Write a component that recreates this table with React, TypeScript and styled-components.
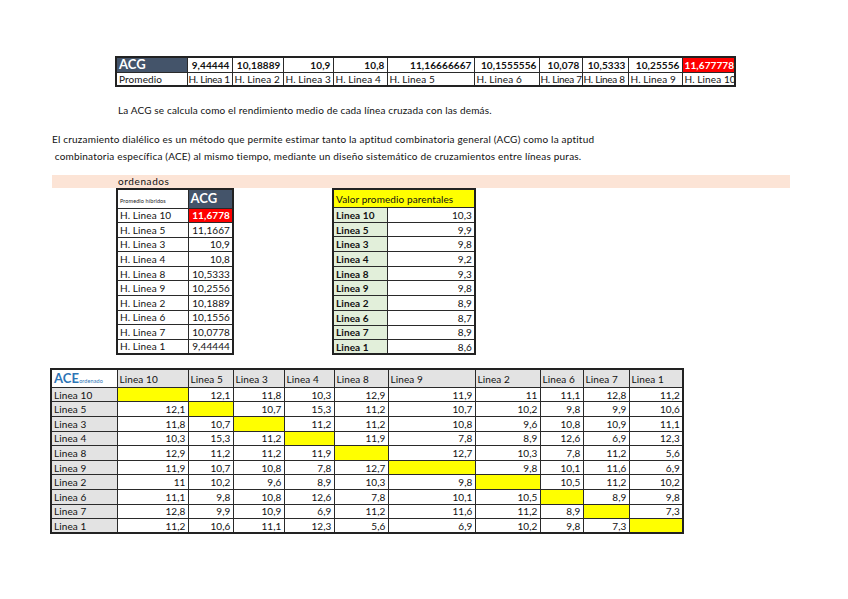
import React from "react";
import styled, { createGlobalStyle } from "styled-components";

const FONT = `"Lato", "Open Sans", "Liberation Sans", sans-serif`;

const Global = createGlobalStyle`
  html, body { margin: 0; padding: 0; background: #ffffff; }
  body { font-family: ${FONT}; color: #111; }
`;

const Page = styled.div`
  width: 848px;
  height: 599px;
  padding-top: 56px;
  box-sizing: border-box;
  display: flex;
  flex-direction: column;
  font-size: 10px;
`;

const Sheet = styled.table<{ $left: number; $width: number }>`
  margin-left: ${(p) => p.$left}px;
  width: ${(p) => p.$width}px;
  table-layout: fixed;
  border-collapse: collapse;
  border: 2px solid #222;
  font-family: ${FONT};
  font-size: 10px;
`;

const Cell = styled.td<{
  $bg?: string;
  $color?: string;
  $bold?: boolean;
  $align?: "left" | "right";
  $h?: number;
  $size?: number;
  $tight?: boolean;
}>`
  border: 1px solid #2a2a2a;
  height: ${(p) => p.$h ?? 14}px;
  padding: 0 ${(p) => (p.$tight ? 1 : 2)}px;
  box-sizing: border-box;
  background: ${(p) => p.$bg ?? "#fff"};
  color: ${(p) => p.$color ?? "#111"};
  font-weight: ${(p) => (p.$bold ? 700 : 400)};
  font-size: ${(p) => p.$size ?? 10}px;
  text-align: ${(p) => p.$align ?? "left"};
  letter-spacing: ${(p) => (p.$tight ? "-0.3px" : "0.1px")};
  white-space: nowrap;
  overflow: hidden;
  line-height: 1;
  vertical-align: middle;
`;

const Note = styled.div`
  margin-top: 16px;
  padding-left: 118px;
  height: 14px;
  line-height: 14px;
  font-size: 10px;
  letter-spacing: 0.15px;
`;

const Para = styled.div`
  margin-top: 14px;
  padding-left: 52px;
  line-height: 17px;
  font-size: 10px;
  letter-spacing: 0.2px;
`;

const Band = styled.div`
  margin-top: 10px;
  margin-left: 52px;
  width: 738px;
  height: 13px;
  background: #fce4d6;
  padding-left: 66px;
  box-sizing: border-box;
  font-size: 10px;
  line-height: 13px;
  letter-spacing: 0.6px;
`;

const TablesRow = styled.div`
  display: flex;
  align-items: flex-start;
`;

const Spacer = styled.div`
  height: 13px;
`;

const AceTitle = styled.span`
  color: #2e75b6;
  font-weight: 700;
  font-size: 13px;
`;

const Tiny = styled.span<{ $color?: string }>`
  font-size: 5.5px;
  color: ${(p) => p.$color ?? "#222"};
`;

const TOP_COLS = [71, 45, 51, 50, 54, 87, 65, 43, 46, 54, 53];
const ACE_COLS = [66, 71, 45, 51, 50, 54, 87, 65, 43, 46, 54];

const topValues = [
  "9,44444",
  "10,18889",
  "10,9",
  "10,8",
  "11,16666667",
  "10,1555556",
  "10,078",
  "10,5333",
  "10,25556",
  "11,677778",
];

const ordered: [string, string][] = [
  ["H. Linea 10", "11,6778"],
  ["H. Linea 5", "11,1667"],
  ["H. Linea 3", "10,9"],
  ["H. Linea 4", "10,8"],
  ["H. Linea 8", "10,5333"],
  ["H. Linea 9", "10,2556"],
  ["H. Linea 2", "10,1889"],
  ["H. Linea 6", "10,1556"],
  ["H. Linea 7", "10,0778"],
  ["H. Linea 1", "9,44444"],
];

const parentales: [string, string][] = [
  ["Linea 10", "10,3"],
  ["Linea 5", "9,9"],
  ["Linea 3", "9,8"],
  ["Linea 4", "9,2"],
  ["Linea 8", "9,3"],
  ["Linea 9", "9,8"],
  ["Linea 2", "8,9"],
  ["Linea 6", "8,7"],
  ["Linea 7", "8,9"],
  ["Linea 1", "8,6"],
];

const aceOrder = ["10", "5", "3", "4", "8", "9", "2", "6", "7", "1"];
const Y = null;
const ace: (string | null)[][] = [
  [Y, "12,1", "11,8", "10,3", "12,9", "11,9", "11", "11,1", "12,8", "11,2"],
  ["12,1", Y, "10,7", "15,3", "11,2", "10,7", "10,2", "9,8", "9,9", "10,6"],
  ["11,8", "10,7", Y, "11,2", "11,2", "10,8", "9,6", "10,8", "10,9", "11,1"],
  ["10,3", "15,3", "11,2", Y, "11,9", "7,8", "8,9", "12,6", "6,9", "12,3"],
  ["12,9", "11,2", "11,2", "11,9", Y, "12,7", "10,3", "7,8", "11,2", "5,6"],
  ["11,9", "10,7", "10,8", "7,8", "12,7", Y, "9,8", "10,1", "11,6", "6,9"],
  ["11", "10,2", "9,6", "8,9", "10,3", "9,8", Y, "10,5", "11,2", "10,2"],
  ["11,1", "9,8", "10,8", "12,6", "7,8", "10,1", "10,5", Y, "8,9", "9,8"],
  ["12,8", "9,9", "10,9", "6,9", "11,2", "11,6", "11,2", "8,9", Y, "7,3"],
  ["11,2", "10,6", "11,1", "12,3", "5,6", "6,9", "10,2", "9,8", "7,3", Y],
];

const SLATE = "#44546a";
const RED = "#ff0000";
const YELLOW = "#ffff00";
const GREEN = "#e2efda";
const GRAY = "#e3e3e3";

function Cols({ widths }: { widths: number[] }) {
  return (
    <colgroup>
      {widths.map((w, i) => (
        <col key={i} style={{ width: w }} />
      ))}
    </colgroup>
  );
}

export default function App() {
  return (
    <>
      <Global />
      <Page>
        <Sheet $left={115} $width={620}>
          <Cols widths={TOP_COLS} />
          <tbody>
            <tr>
              <Cell $bg={SLATE} $color="#fff" $bold $size={13} $h={15}>
                ACG
              </Cell>
              {topValues.map((v, i) => (
                <Cell
                  key={i}
                  $h={15}
                  $bold
                  $align="right"
                  $bg={i === 9 ? RED : "#fff"}
                  $color={i === 9 ? "#fff" : "#111"}
                >
                  {v}
                </Cell>
              ))}
            </tr>
            <tr>
              <Cell>Promedio</Cell>
              {topValues.map((_, i) => (
                <Cell key={i} $tight={i === 0 || i === 6 || i === 7}>
                  H. Linea {i + 1}
                </Cell>
              ))}
            </tr>
          </tbody>
        </Sheet>

        <Note>La ACG se calcula como el rendimiento medio de cada línea cruzada con las demás.</Note>

        <Para>
          El cruzamiento dialélico es un método que permite estimar tanto la aptitud combinatoria general (ACG) como la aptitud
          <br />
          &nbsp;combinatoria específica (ACE) al mismo tiempo, mediante un diseño sistemático de cruzamientos entre líneas puras.
        </Para>

        <Band>ordenados</Band>

        <TablesRow>
          <Sheet $left={116} $width={116}>
            <Cols widths={[71, 45]} />
            <tbody>
              <tr>
                <Cell $h={19}>
                  <Tiny>Promedio híbridos</Tiny>
                </Cell>
                <Cell $h={19} $bg={SLATE} $color="#fff" $bold $size={13}>
                  ACG
                </Cell>
              </tr>
              {ordered.map(([l, v], i) => (
                <tr key={l}>
                  <Cell $h={14.6}>{l}</Cell>
                  <Cell
                    $h={14.6}
                    $align="right"
                    $bold={i === 0}
                    $bg={i === 0 ? RED : "#fff"}
                    $color={i === 0 ? "#fff" : "#111"}
                  >
                    {v}
                  </Cell>
                </tr>
              ))}
            </tbody>
          </Sheet>

          <Sheet $left={98} $width={142}>
            <Cols widths={[54, 88]} />
            <tbody>
              <tr>
                <Cell $h={18.5} colSpan={2} $bg={YELLOW}>
                  Valor promedio parentales
                </Cell>
              </tr>
              {parentales.map(([l, v]) => (
                <tr key={l}>
                  <Cell $h={14.7} $bg={GREEN} $bold>
                    {l}
                  </Cell>
                  <Cell $h={14.7} $align="right">
                    {v}
                  </Cell>
                </tr>
              ))}
            </tbody>
          </Sheet>
        </TablesRow>

        <Spacer />

        <Sheet $left={50} $width={632}>
          <Cols widths={ACE_COLS} />
          <tbody>
            <tr>
              <Cell $h={18}>
                <AceTitle>ACE</AceTitle>
                <Tiny $color="#2e75b6">ordenado</Tiny>
              </Cell>
              {aceOrder.map((n) => (
                <Cell key={n} $h={18} $bg={GRAY}>
                  Linea {n}
                </Cell>
              ))}
            </tr>
            {ace.map((row, r) => (
              <tr key={r}>
                <Cell $h={14.6} $bg={GRAY}>
                  Linea {aceOrder[r]}
                </Cell>
                {row.map((v, c) => (
                  <Cell key={c} $h={14.6} $align="right" $bg={v === null ? YELLOW : "#fff"}>
                    {v ?? ""}
                  </Cell>
                ))}
              </tr>
            ))}
          </tbody>
        </Sheet>
      </Page>
    </>
  );
}
